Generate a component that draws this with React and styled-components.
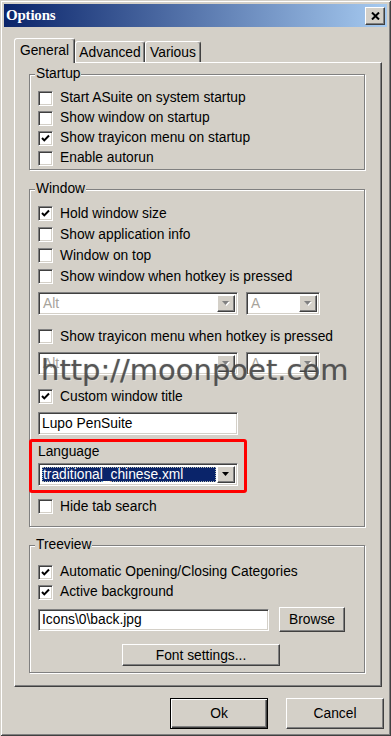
import React from 'react';
import styled, { createGlobalStyle, css } from 'styled-components';

const face = '#d4d0c8';

const GlobalStyle = createGlobalStyle`
  html, body {
    margin: 0;
    padding: 0;
    background: ${face};
  }
  body {
    font-family: 'Liberation Sans', Arial, sans-serif;
  }
`;

const raised = css`
  border: 1px solid;
  border-color: #fff #404040 #404040 #fff;
  box-shadow: inset -1px -1px #808080, inset 1px 1px ${face};
`;

const sunken = css`
  border: 1px solid;
  border-color: #808080 #fff #fff #808080;
  box-shadow: inset 1px 1px #404040, inset -1px -1px ${face};
`;

const Window = styled.div`
  position: relative;
  box-sizing: border-box;
  width: 391px;
  height: 736px;
  padding: 4px;
  background: ${face};
  box-shadow: inset 1px 1px ${face}, inset -1px -1px #404040, inset 2px 2px #fff,
    inset -2px -2px #808080;
  font: 13.8px 'Liberation Sans', Arial, sans-serif;
  color: #000;
  overflow: hidden;
`;

const TitleBar = styled.div`
  display: flex;
  align-items: center;
  justify-content: space-between;
  height: 23px;
  padding: 0 2px;
  background: linear-gradient(to right, #0a246a, #a6caf0);
`;

const TitleText = styled.span`
  font: bold 15px 'Liberation Serif', 'Times New Roman', serif;
  color: #fff;
  letter-spacing: -0.2px;
`;

const CloseButton = styled.div`
  box-sizing: border-box;
  width: 20px;
  height: 18px;
  display: flex;
  align-items: center;
  justify-content: center;
  background: ${face};
  ${raised};
`;

const Body = styled.div`
  padding: 11px 3px 0 10px;
`;

const TabStrip = styled.div`
  display: flex;
  align-items: flex-end;
  height: 24px;
`;

const Tab = styled.div`
  box-sizing: border-box;
  position: relative;
  z-index: ${(p) => (p.$active ? 1 : 0)};
  width: ${(p) => p.$w}px;
  height: ${(p) => (p.$active ? 25 : 21)}px;
  margin-bottom: ${(p) => (p.$active ? -1 : 0)}px;
  padding-bottom: ${(p) => (p.$active ? 1 : 0)}px;
  display: flex;
  align-items: center;
  justify-content: center;
  background: ${face};
  border: 1px solid;
  border-bottom: none;
  border-color: #fff #404040 transparent #fff;
  border-radius: 3px 3px 0 0;
  box-shadow: inset -1px 0 #808080;
`;

const Panel = styled.div`
  box-sizing: border-box;
  width: 368px;
  height: 625px;
  padding: 11px 16px 0 14px;
  border: 1px solid;
  border-color: #fff #404040 #404040 #fff;
  box-shadow: inset -1px -1px #808080;
`;

const Group = styled.div`
  position: relative;
  margin-top: ${(p) => p.$mt || 0}px;
  padding: ${(p) => p.$pt}px 8px ${(p) => p.$pb}px 8px;
  border: 1px solid #808080;
  box-shadow: inset 1px 1px #fff, 1px 1px #fff;
`;

const Legend = styled.span`
  position: absolute;
  top: -9px;
  left: 5px;
  padding: 0 1px;
  line-height: 16px;
  background: ${face};
`;

const CheckRow = styled.div`
  display: flex;
  align-items: center;
  height: ${(p) => p.$h || 21}px;
  margin-top: ${(p) => p.$mt || 0}px;
`;

const Box = styled.div`
  box-sizing: border-box;
  width: 15px;
  height: 15px;
  margin-right: 7px;
  flex: none;
  display: flex;
  align-items: center;
  justify-content: center;
  background: #fff;
  ${sunken};
`;

const Label = styled.span`
  white-space: nowrap;
  line-height: 16px;
`;

const CheckBox = ({ checked, children, h, mt }) => (
  <CheckRow $h={h} $mt={mt}>
    <Box>
      {checked && (
        <svg width="9" height="9" viewBox="0 0 9 9">
          <polyline points="1,4 3.3,6.4 8,1.5" fill="none" stroke="#000" strokeWidth="2" />
        </svg>
      )}
    </Box>
    <Label>{children}</Label>
  </CheckRow>
);

const ComboRow = styled.div`
  display: flex;
  gap: 8px;
  margin-top: ${(p) => p.$mt || 0}px;
`;

const ComboShell = styled.div`
  box-sizing: border-box;
  width: ${(p) => p.$w}px;
  height: 23px;
  padding: 2px;
  display: flex;
  background: #fff;
  ${sunken};
  margin-top: ${(p) => p.$mt || 0}px;
`;

const ComboText = styled.div`
  flex: 1;
  margin: 1px;
  padding-left: 1px;
  display: flex;
  align-items: center;
  line-height: 15px;
  white-space: nowrap;
  color: ${(p) => (p.$disabled ? '#a7a39b' : '#000')};
  ${(p) =>
    p.$selected &&
    css`
      background: #0a246a;
      color: #fff;
      outline: 1px dotted rgba(255, 255, 210, 0.7);
      outline-offset: -1px;
    `}
`;

const DropButton = styled.div`
  box-sizing: border-box;
  width: 18px;
  flex: none;
  display: flex;
  align-items: center;
  justify-content: center;
  background: ${face};
  ${raised};
`;

const Arrow = ({ disabled }) => (
  <svg width="8" height="5" viewBox="0 0 8 5">
    {disabled && <polygon points="1,1 8,1 4.5,5" fill="#fff" />}
    <polygon points="0,0 7,0 3.5,4" fill={disabled ? '#808080' : '#000'} />
  </svg>
);

const Combo = ({ w, value, disabled, selected, mt }) => (
  <ComboShell $w={w} $mt={mt}>
    <ComboText $disabled={disabled} $selected={selected}>
      {value}
    </ComboText>
    <DropButton>
      <Arrow disabled={disabled} />
    </DropButton>
  </ComboShell>
);

const TextInput = styled.div`
  box-sizing: border-box;
  width: ${(p) => p.$w}px;
  height: ${(p) => p.$h || 23}px;
  margin-top: ${(p) => p.$mt || 0}px;
  padding-left: 3px;
  display: flex;
  align-items: center;
  background: #fff;
  white-space: nowrap;
  ${sunken};
`;

const Highlight = styled.div`
  box-sizing: border-box;
  width: 218px;
  height: 54px;
  margin: 4px 0 0 -9px;
  padding: 2px 6px 0;
  position: relative;
  border: 3px solid #ff0000;
  border-radius: 3px;
`;

const FieldRow = styled.div`
  display: flex;
  align-items: center;
  gap: 10px;
  height: 25px;
  margin-top: 5px;
`;

const Button = styled.div`
  box-sizing: border-box;
  width: ${(p) => p.$w}px;
  height: ${(p) => p.$h}px;
  margin-left: ${(p) => p.$ml || 0}px;
  margin-top: ${(p) => p.$mt || 0}px;
  display: flex;
  align-items: center;
  justify-content: center;
  background: ${face};
  ${(p) =>
    p.$default
      ? css`
          border: 1px solid #000;
          box-shadow: inset 1px 1px #fff, inset -1px -1px #404040, inset -2px -2px #808080;
        `
      : raised};
`;

const ButtonBar = styled.div`
  display: flex;
  justify-content: flex-end;
  gap: 18px;
  margin-top: 11px;
`;

const Watermark = styled.div`
  position: absolute;
  left: 41px;
  top: 353px;
  font: 29px 'DejaVu Sans', Verdana, sans-serif;
  line-height: 34px;
  color: rgba(66, 66, 66, 0.78);
  text-shadow: 0 0 1px rgba(80, 80, 80, 0.6), 1px 1px 0 rgba(255, 255, 255, 0.35);
  white-space: nowrap;
  pointer-events: none;
`;

export default function App() {
  return (
    <Window>
      <GlobalStyle />
      <TitleBar>
        <TitleText>Options</TitleText>
        <CloseButton>
          <svg width="9" height="8" viewBox="0 0 9 8">
            <path d="M1 0.5 L8 7.5 M8 0.5 L1 7.5" stroke="#000" strokeWidth="2" />
          </svg>
        </CloseButton>
      </TitleBar>
      <Body>
        <TabStrip>
          <Tab $w={61} $active>
            General
          </Tab>
          <Tab $w={70}>Advanced</Tab>
          <Tab $w={56}>Various</Tab>
        </TabStrip>
        <Panel>
          <Group $pt={13} $pb={1}>
            <Legend>Startup</Legend>
            <CheckBox h={20}>Start ASuite on system startup</CheckBox>
            <CheckBox h={20}>Show window on startup</CheckBox>
            <CheckBox h={20} checked>
              Show trayicon menu on startup
            </CheckBox>
            <CheckBox h={20}>Enable autorun</CheckBox>
          </Group>

          <Group $mt={19} $pt={13} $pb={9}>
            <Legend>Window</Legend>
            <CheckBox checked>Hold window size</CheckBox>
            <CheckBox>Show application info</CheckBox>
            <CheckBox>Window on top</CheckBox>
            <CheckBox>Show window when hotkey is pressed</CheckBox>
            <ComboRow $mt={5}>
              <Combo w={200} value="Alt" disabled />
              <Combo w={74} value="A" disabled />
            </ComboRow>
            <CheckBox mt={11}>Show trayicon menu when hotkey is pressed</CheckBox>
            <ComboRow $mt={5}>
              <Combo w={200} value="Alt" disabled />
              <Combo w={74} value="A" disabled />
            </ComboRow>
            <CheckBox mt={11} checked>
              Custom window title
            </CheckBox>
            <TextInput $w={200} $mt={5}>
              Lupo PenSuite
            </TextInput>
            <Highlight>
              <Label>Language</Label>
              <Combo w={200} value="traditional_chinese.xml" selected mt={3} />
            </Highlight>
            <CheckBox mt={3}>Hide tab search</CheckBox>
          </Group>

          <Group $mt={18} $pt={16} $pb={6}>
            <Legend>Treeview</Legend>
            <CheckBox h={20} checked>
              Automatic Opening/Closing Categories
            </CheckBox>
            <CheckBox h={20} checked>
              Active background
            </CheckBox>
            <FieldRow>
              <TextInput $w={231} $h={22}>
                Icons\0\back.jpg
              </TextInput>
              <Button $w={66} $h={25}>
                Browse
              </Button>
            </FieldRow>
            <Button $w={158} $h={22} $ml={84} $mt={12}>
              Font settings...
            </Button>
          </Group>
        </Panel>
        <ButtonBar>
          <Button $w={98} $h={31} $default>
            Ok
          </Button>
          <Button $w={98} $h={31}>
            Cancel
          </Button>
        </ButtonBar>
      </Body>
      <Watermark>http://moonpoet.com</Watermark>
    </Window>
  );
}
